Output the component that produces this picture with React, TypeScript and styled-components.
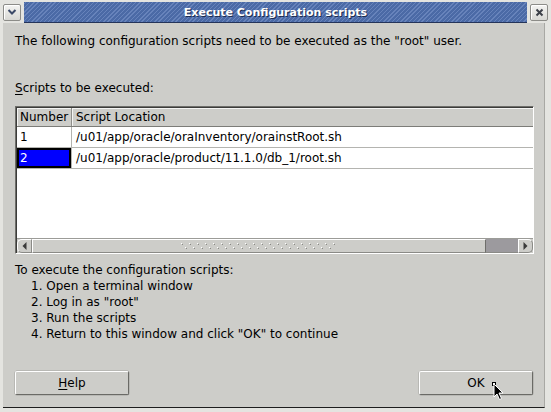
import styled, { createGlobalStyle } from 'styled-components'

const GlobalStyle = createGlobalStyle`
  html, body {
    margin: 0;
    padding: 0;
    background: #cdcdc9;
  }
  body {
    font-family: "DejaVu Sans", "Liberation Sans", sans-serif;
    font-size: 12px;
    color: #000;
  }
`

const Window = styled.div`
  position: relative;
  width: 551px;
  height: 412px;
  display: flex;
  flex-direction: column;
  background: #e4e4e0;
  overflow: hidden;
`

const TitleBar = styled.div`
  display: flex;
  align-items: stretch;
  gap: 3px;
  height: 23px;
  padding: 2px 3px 0 3px;
  box-sizing: border-box;
`

const FrameButton = styled.div`
  align-self: center;
  width: 18px;
  height: 17px;
  margin-top: -1px;
  box-sizing: border-box;
  display: flex;
  align-items: center;
  justify-content: center;
  background: linear-gradient(#f4f4f2, #d8d8d4);
  border: 1px solid #8c8c88;
  border-radius: 2px;
  box-shadow: inset 1px 1px 0 #fff;
`

const TitleStripe = styled.div`
  flex: 1;
  display: flex;
  align-items: center;
  justify-content: center;
  background-color: #4b6aa6;
  background-image: repeating-linear-gradient(
    -45deg,
    #4b6aa6 0px,
    #4b6aa6 2px,
    #6783bb 2px,
    #6783bb 3px
  );
  border-bottom: 1px solid #24345a;
  color: #fff;
  font-family: "DejaVu Sans", "Liberation Sans", sans-serif;
  font-weight: bold;
  font-size: 11px;
  text-shadow: 1px 1px 0 #1c2c50;
`

const Body = styled.div`
  flex: 1;
  display: flex;
  flex-direction: column;
  margin: 0 6px 4px 3px;
  padding: 10px 10px 12px 12px;
  background: #cdcdc9;
  border-bottom: 1px solid #1e1e1e;
  border-right: 1px solid #a8a8a4;
`

const Line = styled.div<{ $indent?: boolean }>`
  height: 16px;
  line-height: 16px;
  white-space: nowrap;
  padding-left: ${p => (p.$indent ? '16px' : '0')};
`

const Label = styled(Line)`
  margin-top: 31px;
`

const Mnemonic = styled.span`
  text-decoration: underline;
  text-underline-offset: 2px;
`

const TableBox = styled.div`
  margin-top: 10px;
  height: 148px;
  box-sizing: border-box;
  display: flex;
  flex-direction: column;
  border-top: 1px solid #6e6e6a;
  border-left: 1px solid #6e6e6a;
  border-right: 1px solid #fff;
  border-bottom: 1px solid #fff;
  box-shadow: inset 1px 1px 0 #3c3c3a;
  padding: 1px 0 0 1px;
  background: #fff;
`

const Row = styled.div<{ $header?: boolean }>`
  display: flex;
  height: ${p => (p.$header ? '19px' : '21px')};
  box-sizing: border-box;
  background: ${p => (p.$header ? '#cdcdc9' : '#fff')};
  border-bottom: 1px solid ${p => (p.$header ? '#7c7c78' : '#b4b4b0')};
`

const Cell = styled.div<{ $number?: boolean; $header?: boolean; $selected?: boolean }>`
  width: ${p => (p.$number ? '55px' : 'auto')};
  flex: ${p => (p.$number ? 'none' : '1')};
  display: flex;
  align-items: center;
  padding-left: ${p => (p.$number ? '3px' : '4px')};
  box-sizing: border-box;
  white-space: nowrap;
  border-right: ${p => (p.$number ? `1px solid ${p.$header ? '#8e8e8a' : '#b4b4b0'}` : 'none')};
  box-shadow: ${p =>
    p.$selected ? 'inset 0 0 0 2px #000' : p.$header ? 'inset 1px 1px 0 #f4f4f2' : 'none'};
  background: ${p => (p.$selected ? '#0000ff' : 'transparent')};
  color: ${p => (p.$selected ? '#fff' : '#000')};
`

const Filler = styled.div`
  flex: 1;
`

const ScrollBar = styled.div`
  display: flex;
  height: 15px;
  box-sizing: border-box;
  border-top: 1px solid #9c9c98;
  background: #cdcdc9;
`

const ArrowButton = styled.div<{ $side: 'left' | 'right' }>`
  width: 15px;
  flex: none;
  display: flex;
  align-items: center;
  justify-content: center;
  box-sizing: border-box;
  background: #cdcdc9;
  border: 1px solid #fff;
  border-right-color: #8a8a86;
  border-bottom-color: #8a8a86;
  border-radius: ${p => (p.$side === 'left' ? '5px 0 0 5px' : '0 5px 5px 0')};
`

const Thumb = styled.div`
  flex: 1;
  display: flex;
  align-items: center;
  justify-content: center;
  box-sizing: border-box;
  background: #cdcdc9;
  border-top: 1px solid #fff;
  border-left: 1px solid #fff;
  border-right: 1px solid #6e6e6a;
  border-bottom: 1px solid #8a8a86;
`

const Trough = styled.div`
  width: 32px;
  flex: none;
  background: #9c9a9e;
  border-bottom: 1px solid #8a8a86;
  box-sizing: border-box;
`

const Instructions = styled.div`
  margin-top: 8px;
`

const ButtonRow = styled.div`
  margin-top: auto;
  display: flex;
  justify-content: space-between;
  padding-right: 1px;
`

const Button = styled.div`
  width: 114px;
  height: 24px;
  box-sizing: border-box;
  display: flex;
  align-items: center;
  justify-content: center;
  background: #cdcdc9;
  border: 1px solid #fff;
  border-right-color: #6a6a66;
  border-bottom-color: #6a6a66;
  border-radius: 2px;
  box-shadow: 0 0 0 0.5px #a4a4a0;
`

const Cursor = styled.svg`
  position: absolute;
  left: 492px;
  top: 382px;
`

const steps = [
  '1. Open a terminal window',
  '2. Log in as "root"',
  '3. Run the scripts',
  '4. Return to this window and click "OK" to continue',
]

const scripts = [
  { number: '1', path: '/u01/app/oracle/oraInventory/orainstRoot.sh' },
  { number: '2', path: '/u01/app/oracle/product/11.1.0/db_1/root.sh' },
]

function App () {
  return (
    <Window>
      <GlobalStyle />
      <TitleBar>
        <FrameButton>
          <svg width='10' height='8' viewBox='0 0 10 8'>
            <path d='M1.5 2 L5 5.5 L8.5 2' fill='none' stroke='#3c4a68' strokeWidth='2' />
          </svg>
        </FrameButton>
        <TitleStripe>Execute Configuration scripts</TitleStripe>
        <FrameButton>
          <svg width='9' height='9' viewBox='0 0 9 9'>
            <path d='M1.5 1.5 L7.5 7.5 M7.5 1.5 L1.5 7.5' stroke='#3c4048' strokeWidth='2' />
          </svg>
        </FrameButton>
      </TitleBar>

      <Body>
        <Line>The following configuration scripts need to be executed as the "root" user.</Line>
        <Label>
          <Mnemonic>S</Mnemonic>cripts to be executed:
        </Label>

        <TableBox>
          <Row $header>
            <Cell $number $header>Number</Cell>
            <Cell $header>Script Location</Cell>
          </Row>
          {scripts.map((s, i) => (
            <Row key={s.number}>
              <Cell $number $selected={i === 1}>{s.number}</Cell>
              <Cell>{s.path}</Cell>
            </Row>
          ))}
          <Filler />
          <ScrollBar>
            <ArrowButton $side='left'>
              <svg width='5' height='8' viewBox='0 0 5 8'>
                <path d='M4.5 0 L0.5 4 L4.5 8 Z' fill='#3a3a3a' />
              </svg>
            </ArrowButton>
            <Thumb>
              <svg width='156' height='9' viewBox='0 0 156 9'>
                <defs>
                  <pattern id='grip' width='8' height='9' patternUnits='userSpaceOnUse'>
                    <rect x='0' y='1' width='1' height='1' fill='#fff' />
                    <rect x='1' y='2' width='1' height='1' fill='#8a8a86' />
                    <rect x='4' y='5' width='1' height='1' fill='#fff' />
                    <rect x='5' y='6' width='1' height='1' fill='#8a8a86' />
                  </pattern>
                </defs>
                <rect width='156' height='9' fill='url(#grip)' />
              </svg>
            </Thumb>
            <Trough />
            <ArrowButton $side='right'>
              <svg width='5' height='8' viewBox='0 0 5 8'>
                <path d='M0.5 0 L4.5 4 L0.5 8 Z' fill='#3a3a3a' />
              </svg>
            </ArrowButton>
          </ScrollBar>
        </TableBox>

        <Instructions>
          <Line>To execute the configuration scripts:</Line>
          {steps.map(step => (
            <Line key={step} $indent>{step}</Line>
          ))}
        </Instructions>

        <ButtonRow>
          <Button>
            <span><Mnemonic>H</Mnemonic>elp</span>
          </Button>
          <Button>OK</Button>
        </ButtonRow>
      </Body>

      <Cursor width='14' height='20' viewBox='0 0 14 20'>
        <rect x='0.5' y='0.5' width='3' height='3' fill='#fff' stroke='#000' strokeWidth='1' />
        <path d='M2 2 L2 15 L5 12 L7.5 17.5 L9.5 16.5 L7 11 L11 11 Z' fill='#000' stroke='#fff' strokeWidth='1' />
      </Cursor>
    </Window>
  )
}

export default App
